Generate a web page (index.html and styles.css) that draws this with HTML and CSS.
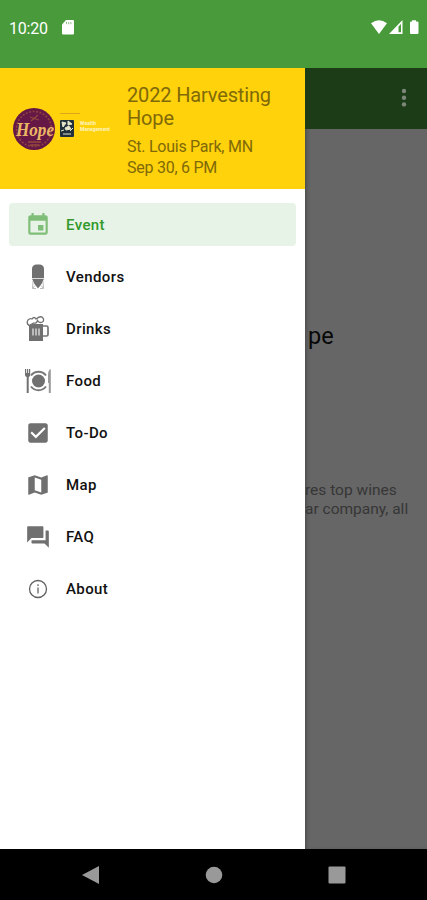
FILE: index.html
```html
<!DOCTYPE html>
<html lang="en">
<head>
<meta charset="utf-8">
<title>Harvesting Hope</title>
<link rel="stylesheet" href="styles.css">
</head>
<body>
<div class="screen">
  <header class="status">
    <span class="clock">10:20</span>
    <svg class="sd" width="12" height="15" viewBox="0 0 12 15"><path d="M4 0h7q1 0 1 1v12.500q0 1-1 1H1q-1 0-1-1V4.500z" fill="#fff"/><path d="M4.500 2v2.200M6.700 2v2.200M8.900 2v2.200" stroke="#489a3b" stroke-width="1" opacity=".6"/></svg>
    <svg class="signals" width="49" height="15" viewBox="0 0 49 15" fill="#fff"><path d="M0 3.200Q8 -2.500 16 3.200L8 14z"/><path fill-rule="evenodd" d="M18 14L31.500 0v14zM27.500 6.500V12.300h2.500V4z"/><path d="M41 1.500V.3h4v1.200h1.500q1 0 1 1V13q0 1-1 1h-6.500q-1 0-1-1V2.500q0-1 1-1z"/></svg>
  </header>
  <main class="main">
    <aside class="drawer">
      <div class="banner">
        <svg class="logos" width="100" height="44" viewBox="0 0 100 44">
          <circle cx="21" cy="22" r="21" fill="#651845"/>
          <circle cx="21" cy="22" r="17.500" fill="none" stroke="#a4553c" stroke-width="1.600" stroke-dasharray="2 1.500" opacity=".7"/>
          <path d="M17 10l9 3M18 14l7-6M15 35h13M17 38h9" stroke="#94493d" stroke-width="1.300"/>
          <text class="hope" x="3" y="29" textLength="38" lengthAdjust="spacingAndGlyphs">Hope</text>
          <path d="M47 6.500h20" stroke="#dca51a" stroke-width="1"/>
          <rect x="47" y="13" width="14" height="17" rx="1" fill="#20313d"/>
          <path d="M49 15l4 1-3 4zM55 14l4 3-4 1zM52 21l4-2 2 3-5 1zM48 24l3-1M57 24l3-3M50 27h8" fill="#e9e7c9" stroke="#e9e7c9" stroke-width="1"/>
          <text class="brand" x="67" y="18" textLength="16">Wealth</text>
          <text class="brand" x="67" y="24" textLength="30">Management</text>
        </svg>
        <div class="info">
          <h1>2022 Harvesting<br>Hope</h1>
          <p>St. Louis Park, MN<br>Sep 30, 6 PM</p>
        </div>
      </div>
      <nav class="menu">
        <a class="item active"><svg class="icon" viewBox="0 0 24 24"><path d="M17 12h-5v5h5v-5zM16 1v2H8V1H6v2H5c-1.110 0-2 .9-2 2v14a2 2 0 0 0 2 2h14c1.100 0 2-.9 2-2V5c0-1.100-.9-2-2-2h-1V1h-2zm3 18H5V8h14v11z"/></svg>Event</a>
        <a class="item"><svg class="icon" viewBox="0 0 26 26"><path d="M7 5Q7 1 11 .5h4q4 .5 4 4.500v9H7z"/><path d="M7 14.800h12L16.500 20 13 24.500 9.500 20z"/><path d="M8 17L7.500 24.500l2.500-3M18 17l.5 7.500-2.500-3M8 24.500h3M15 24.500h3" fill="none" stroke="#aaa" stroke-width=".8"/></svg>Vendors</a>
        <a class="item"><svg class="icon" viewBox="0 0 26 26"><path d="M4 8h14v17H4z"/><path d="M18 10h3.500q1.500 0 1.500 1.500v7q0 1.500-1.500 1.500H18" fill="none" stroke="#747474" stroke-width="1.700"/><path d="M4 9.500Q1 7 3 4q2-2 4-1 2-3 4 0Q17-1.500 18.500 3q.5 3.500-3 3.500-2 0-3-2-1 3.500-4 2.500Q6.500 8 4 9.500z" fill="#fff" stroke="#707070" stroke-width="1.300"/><path d="M8 12.500v7M11 12.500v7M14 12.500v7" stroke="#c8c8c8" stroke-width="1.700"/></svg>Drinks</a>
        <a class="item"><svg class="icon wide" viewBox="0 0 28 26"><circle cx="14.500" cy="13" r="6.500"/><path d="M7 7.500a9.400 9.400 0 0 1 15 0M7 18.500a9.400 9.400 0 0 0 15 0" fill="none" stroke="#777" stroke-width="2"/><path d="M1 1h1.200v4h.8V1h1.200v4H5V1h1.200v6q0 1.500-1.500 2v16H2.700V9Q1 8.500 1 7z"/><path d="M24 15V7q0-5 2.800-6v24H24.800V15z" fill="#999"/></svg>Food</a>
        <a class="item"><svg class="icon" viewBox="0 0 24 24"><path d="M19 3H5c-1.110 0-2 .9-2 2v14c0 1.100.89 2 2 2h14c1.110 0 2-.9 2-2V5c0-1.100-.89-2-2-2zm-9 14l-5-5 1.410-1.410L10 14.170l7.590-7.590L19 8l-9 9z"/></svg>To-Do</a>
        <a class="item"><svg class="icon" viewBox="0 0 24 24"><path d="M20.500 3l-.16.030L15 5.100 9 3 3.360 4.900c-.21.070-.36.250-.36.480V20.500c0 .28.220.5.500.5l.16-.03L9 18.900l6 2.100 5.640-1.900c.21-.07.36-.25.36-.48V3.500c0-.28-.22-.5-.5-.5zM15 19l-6-2.110V5l6 2.110V19z"/></svg>Map</a>
        <a class="item"><svg class="icon" viewBox="0 0 24 24"><path d="M21 6h-2v9H6v2c0 .55.450 1 1 1h11l4 4V7c0-.55-.45-1-1-1zm-4 6V3c0-.55-.45-1-1-1H3c-.55 0-1 .45-1 1v14l4-4h10c.55 0 1-.45 1-1z"/></svg>FAQ</a>
        <a class="item"><svg class="icon" viewBox="0 0 26 26"><circle cx="13" cy="13" r="8.500" fill="none" stroke="#606060" stroke-width="1.300"/><path d="M12.300 11.500h1.400V17.500h-1.400zM12.300 8.300h1.400v1.600h-1.400z"/></svg>About</a>
      </nav>
    </aside>
    <section class="page">
      <div class="toolbar"><svg width="6" height="20" viewBox="0 0 6 20" fill="#7c877a"><circle cx="3" cy="3" r="2.200"/><circle cx="3" cy="9.700" r="2.200"/><circle cx="3" cy="16.400" r="2.200"/></svg></div>
      <h2>pe</h2>
      <p class="about">res top wines<br>ar company, all</p>
    </section>
  </main>
  <footer class="keys">
    <svg width="18" height="20" viewBox="0 0 18 20"><path d="M0 10L17 1v18z"/></svg>
    <svg width="18" height="18" viewBox="0 0 18 18"><circle cx="9" cy="9" r="8.300"/></svg>
    <svg width="18" height="18" viewBox="0 0 18 18"><rect x=".5" y=".5" width="17" height="17" rx="1"/></svg>
  </footer>
</div>
</body>
</html>
```
FILE: styles.css
```css
* { box-sizing: border-box; }
body { margin: 0; font-family: Roboto, "Liberation Sans", sans-serif; }
h1, h2, p { margin: 0; font-weight: 400; }
.screen { width: 427px; height: 900px; display: flex; flex-direction: column; overflow: hidden; }
.status { height: 68px; background: #489a3b; display: flex; align-items: flex-start; padding: 20px 7px 0 9px; color: #fff; }
.clock { font-size: 16px; line-height: 17px; width: 53px; letter-spacing: -.2px; }
.signals { margin-left: auto; }
.main { height: 781px; display: grid; grid-template-columns: 305px 122px; }
.drawer { background: #fff; }
.banner { height: 121px; background: #ffd20c; display: flex; padding: 16px 0 0 13px; color: #806908; }
.logos { margin-top: 23px; width: 100px; flex: none; }
.hope { font: italic 700 18px "Liberation Serif", serif; fill: #eab765; }
.brand { font: 700 5px Roboto, sans-serif; fill: #fff4c0; }
.info { margin-left: 14px; white-space: nowrap; }
.info h1 { font-size: 20px; line-height: 23px; letter-spacing: -.15px; }
.info p { font-size: 16px; line-height: 21px; margin-top: 6px; letter-spacing: -.25px; }
.menu { padding: 14px 9px; display: flex; flex-direction: column; gap: 9.1px; }
.item { height: 43px; display: flex; align-items: center; padding-left: 16px; border-radius: 4px; font-size: 15px; font-weight: 500; letter-spacing: .4px; color: #111; }
.item.active { background: #e8f3e7; color: #32992a; }
.icon { width: 26px; height: 26px; margin-right: 15px; fill: #707070; flex: none; }
.wide { width: 28px; margin-left: -1px; margin-right: 14px; }
.active .icon { fill: #7fbe78; }
.page { background: #666; overflow: hidden; box-shadow: inset 3px 0 4px -2px #444; }
.toolbar { height: 61px; background: #1b3c16; display: flex; justify-content: flex-end; padding: 20px 20px 0 0; }
.page h2 { font-size: 23.5px; line-height: 28px; margin: 193px 0 0 3px; color: #080808; }
.about { margin: 131px 0 0; font-size: 15.5px; line-height: 18.5px; color: #363636; white-space: nowrap; }
.keys { height: 51px; background: #000; display: grid; grid-template-columns: 18px 18px 18px; column-gap: 105px; align-items: center; padding-left: 82px; fill: #999; }
```
